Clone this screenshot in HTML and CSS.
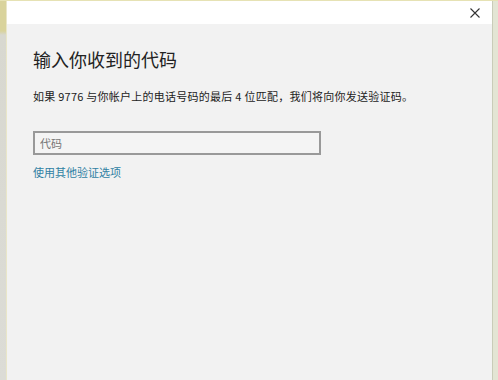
FILE: index.html
```html
<!DOCTYPE html>
<html lang="zh-CN">
<head>
  <meta charset="UTF-8" />
  <title>输入你收到的代码</title>
  <link rel="stylesheet" href="styles.css">
</head>
<body>
  <div class="frame">
    <div class="edge-left"></div>
    <div class="dialog">
      <div class="header">
        <span class="close">
          <svg width="10" height="10" viewBox="0 0 10 10">
            <path d="M0.5 0.5 L9.5 9.5 M9.5 0.5 L0.5 9.5" stroke="#333" stroke-width="1.1" fill="none"/>
          </svg>
        </span>
      </div>
      <div class="content">
        <h1 class="title">输入你收到的代码</h1>
        <p class="desc">如果 9776 与你帐户上的电话号码的最后 4 位匹配，我们将向你发送验证码。</p>
        <input class="code" type="text" placeholder="代码">
        <a class="other" href="#">使用其他验证选项</a>
      </div>
    </div>
    <div class="edge-right"></div>
  </div>
</body>
</html>
```

FILE: styles.css
```css
body {
  margin: 0;
  font-family: "Noto Sans CJK SC", "Noto Sans", sans-serif;
  background: #f2f2f2;
}

.frame {
  display: flex;
  height: 380px;
  border-top: 1px solid #e6e2b4;
  box-sizing: border-box;
}

.edge-left {
  width: 6px;
  background: linear-gradient(to bottom, #d9d39c 0, #d9d39c 30px, #d8d8d0 34px, #dcdcd6 100%);
  border-right: 1px solid #e9e6c8;
}

.edge-right {
  width: 5px;
  background: #e3e5d4;
  border-left: 1px solid #c9ccb8;
}

.dialog {
  flex: 1;
  display: flex;
  flex-direction: column;
  background: #f2f2f2;
}

.header {
  height: 23px;
  background: #fff;
  display: flex;
  justify-content: flex-end;
  align-items: center;
}

.close {
  display: flex;
  margin-right: 12px;
  margin-top: 1px;
}

.content {
  padding: 22px 26px 0;
  display: flex;
  flex-direction: column;
  align-items: flex-start;
}

.title {
  margin: 0;
  font-size: 18px;
  font-weight: normal;
  line-height: 26px;
  color: #222;
}

.desc {
  margin: 16px 0 0;
  font-size: 11px;
  line-height: 16px;
  letter-spacing: 0.25px;
  color: #222;
}

.code {
  margin-top: 27px;
  width: 288px;
  height: 24px;
  box-sizing: border-box;
  border: 2px solid #999;
  background: #f4f4f4;
  padding: 0 5px;
  font-family: inherit;
  font-size: 11px;
  outline: none;
}

.code::placeholder {
  color: #777;
}

.other {
  margin-top: 9px;
  font-size: 11px;
  line-height: 16px;
  color: #2f7fa3;
  text-decoration: none;
}
```
